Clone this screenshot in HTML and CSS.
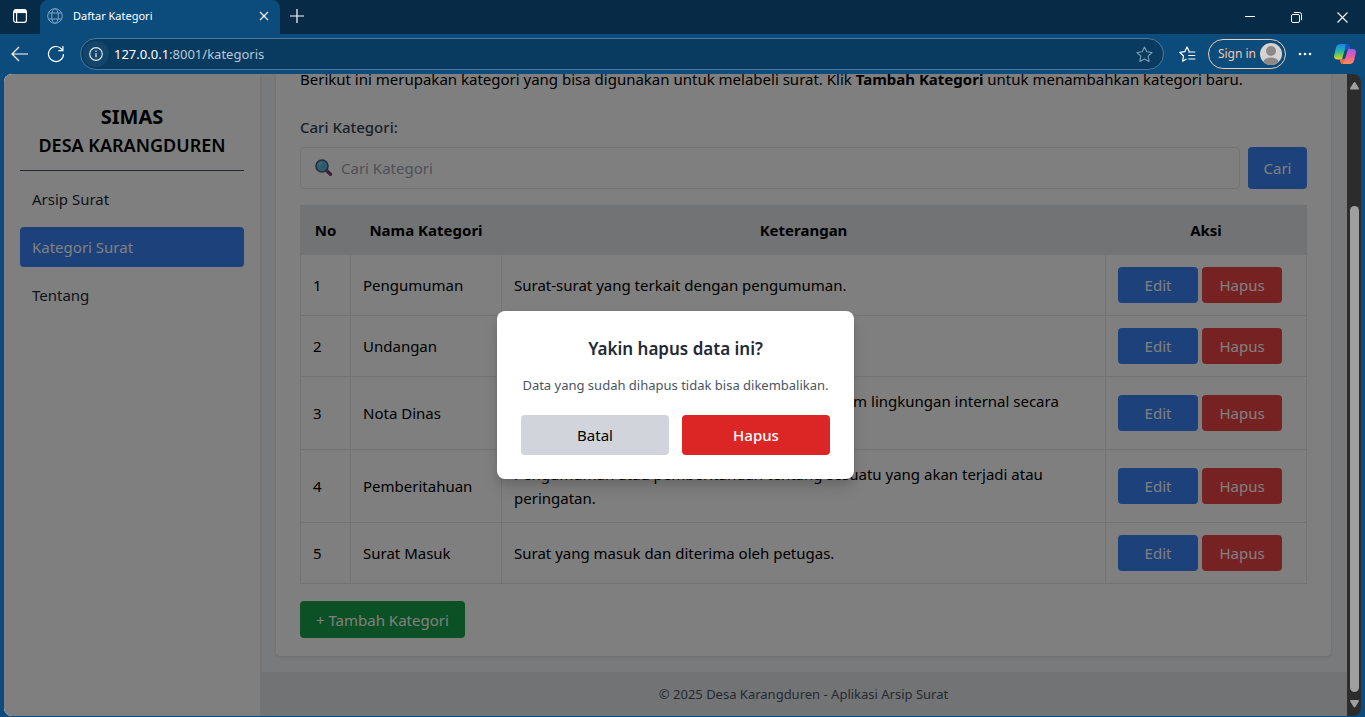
FILE: index.html
```html
<!DOCTYPE html>
<html lang="id">
<head>
<meta charset="utf-8">
<meta name="viewport" content="width=device-width, initial-scale=1">
<title>Daftar Kategori</title>
<link rel="stylesheet" href="styles.css">
</head>
<body>
<div class="browser">
  <header class="tabbar">
    <button class="tab-actions" aria-label="Tab actions"><svg width="16" height="16" viewBox="0 0 16 16" fill="none" stroke="#fff" stroke-width="1.2"><rect x="1.6" y="1.6" width="12.8" height="12.8" rx="2.4"/><path d="M4.6 5v9.4"/><path d="M2 3.4h12" stroke-width="3.4"/></svg></button>
    <div class="tab">
      <svg width="16" height="16" viewBox="0 0 16 16" fill="none" stroke="#7ba3c1" stroke-width="1"><circle cx="8" cy="8" r="7.3"/><ellipse cx="8" cy="8" rx="3.3" ry="7.3"/><path d="M1.4 5h13.2M1.4 11h13.2"/></svg>
      <span class="tab-title">Daftar Kategori</span>
      <button class="tab-close" aria-label="Close tab"><svg width="10" height="10" viewBox="0 0 10 10" stroke="#fff" stroke-width="1.2"><path d="M1 1l8 8M9 1l-8 8"/></svg></button>
    </div>
    <button class="new-tab" aria-label="New tab"><svg width="14" height="14" viewBox="0 0 14 14" stroke="#fff" stroke-width="1.2"><path d="M7 0v14M0 7h14"/></svg></button>
    <div class="window-controls">
      <button aria-label="Minimize"><svg width="10" height="10" viewBox="0 0 10 10" stroke="#fff"><path d="M0 4.5h10"/></svg></button>
      <button aria-label="Restore"><svg width="11" height="11" viewBox="0 0 11 11" fill="none" stroke="#fff"><rect x=".5" y="2.5" width="8" height="8" rx="1.4"/><path d="M2.8 .5h5.700a2 2 0 0 1 2 2v5.700"/></svg></button>
      <button aria-label="Close"><svg width="11" height="11" viewBox="0 0 11 11" stroke="#fff" stroke-width="1.1"><path d="M.5 .5l10 10M10.5 .5l-10 10"/></svg></button>
    </div>
  </header>
  <div class="toolbar">
    <button class="tool" aria-label="Back"><svg width="18" height="16" viewBox="0 0 18 16" fill="none" stroke="#fff" stroke-width="1.2"><path d="M8 1L1 8l7 7M1 8h16"/></svg></button>
    <button class="tool reload" aria-label="Reload"><svg width="18" height="18" viewBox="0 0 18 18" fill="none" stroke="#fff" stroke-width="1.2"><path d="M16.500 9A7.500 7.500 0 1 1 14.600 4l1.200 1.500"/><path d="M15.900 1v4.600h-4.600"/></svg></button>
    <div class="address">
      <span class="site-info"><svg width="14" height="14" viewBox="0 0 14 14" fill="none" stroke="#d7e3ec" stroke-width="1.2"><circle cx="7" cy="7" r="6.3"/><path d="M7 6.3v4M7 3.6v1.3" stroke-width="1.3"/></svg></span>
      <span class="url"><span class="host">127.0.0.1</span>:8001/kategoris</span>
      <button class="star" aria-label="Add to favorites"><svg width="17" height="17" viewBox="0 0 17 17" fill="none" stroke="#7d9db4" stroke-width="1.1" stroke-linejoin="round"><path d="M8.5 1l2.3 4.8 5.2.7-3.8 3.6.9 5.3-4.6-2.5-4.6 2.5.9-5.3L1 6.5l5.2-.7z"/></svg></button>
    </div>
    <button class="tool favorites" aria-label="Favorites"><svg width="17" height="17" viewBox="0 0 17 17" fill="none" stroke="#fff" stroke-width="1.2" stroke-linejoin="round"><path d="M10.3 5.5L8 1 5.8 5.7.8 6.4l3.7 3.6-.9 5.2L7.5 13"/><path d="M9.3 6h7M9.3 9.5h7M9.3 13h7"/></svg></button>
    <button class="sign-in">Sign in <svg width="22" height="22" viewBox="0 0 22 22"><defs><clipPath id="avatar"><circle cx="11" cy="11" r="11"/></clipPath></defs><g clip-path="url(#avatar)"><rect width="22" height="22" fill="#d6d4d2"/><circle cx="11" cy="8" r="5" fill="#8c8987"/><ellipse cx="11" cy="19" rx="7.6" ry="4.6" fill="#8c8987"/></g></svg></button>
    <button class="tool more" aria-label="Settings"><svg width="14" height="4" viewBox="0 0 14 4" fill="#fff"><circle cx="2" cy="2" r="1.3"/><circle cx="7" cy="2" r="1.3"/><circle cx="12" cy="2" r="1.3"/></svg></button>
    <button class="tool copilot" aria-label="Copilot"><svg width="22" height="20" viewBox="0 0 22 20"><defs><linearGradient id="cl" x1="0" y1="0" x2="0" y2="1"><stop offset="0" stop-color="#1686e8"/><stop offset=".45" stop-color="#26b3b0"/><stop offset=".75" stop-color="#7fca4a"/><stop offset="1" stop-color="#f0d02a"/></linearGradient><linearGradient id="cr" x1="0" y1="0" x2="0" y2="1"><stop offset="0" stop-color="#a35cf0"/><stop offset=".5" stop-color="#ec5aa0"/><stop offset="1" stop-color="#ff9058"/></linearGradient></defs><path d="M14 5h4.500q4 0 3.300 4l-1.600 7q-.9 4-4.700 4H9q-2.500 0-3-4.500h3.500q1.500 0 2-2z" fill="url(#cr)"/><path d="M8 15.500H3.500q-4 0-3.300-4l1.600-7Q2.700 0 6.500 0H13q2.500 0 3 4.500h-3.500q-1.500 0-2 2z" fill="url(#cl)"/><path d="M11.500 0H13q2.500 0 3 4.500h-3.300q-1.200 0-1.700 1.500z" fill="#1b50c8"/><path d="M6 15.500h3.500l.8-.4-1.300 4.900q-2.500 0-3-4.500z" fill="#f66b35"/></svg></button>
  </div>

  <div class="viewport">
    <div class="page">
      <aside class="sidebar">
        <div class="brand">
          <h1 class="brand-name">SIMAS</h1>
          <h2 class="brand-village">DESA KARANGDUREN</h2>
        </div>
        <nav class="menu">
          <a href="#arsip">Arsip Surat</a>
          <a href="#kategori" class="active">Kategori Surat</a>
          <a href="#tentang">Tentang</a>
        </nav>
      </aside>
      <div class="content">
        <main class="main">
          <section class="card">
            <p class="intro">Berikut ini merupakan kategori yang bisa digunakan untuk melabeli surat. Klik <b>Tambah Kategori</b> untuk menambahkan kategori baru.</p>
            <form class="search">
              <label class="search-label" for="cari">Cari Kategori:</label>
              <div class="search-row">
                <div class="search-box">
                  <svg width="18" height="18" viewBox="0 0 18 18"><path d="M11.500 11.500l4 3.800" stroke="#7c3a74" stroke-width="3.400" stroke-linecap="round"/><circle cx="7" cy="7" r="6" fill="#5bbbd9" stroke="#44617f" stroke-width="1.600"/><path d="M4 6.500a3.500 3.500 0 0 1 3-2.800" fill="none" stroke="#9adcf0" stroke-width="1.200"/></svg>
                  <input id="cari" type="text" placeholder="Cari Kategori">
                </div>
                <button type="button" class="btn-search">Cari</button>
              </div>
            </form>
            <table class="table">
              <colgroup><col class="col-no"><col class="col-name"><col><col class="col-action"></colgroup>
              <thead><tr><th>No</th><th>Nama Kategori</th><th>Keterangan</th><th>Aksi</th></tr></thead>
              <tbody>
                <tr><td>1</td><td>Pengumuman</td><td>Surat-surat yang terkait dengan pengumuman.</td><td><div class="actions"><button class="edit">Edit</button><button class="delete">Hapus</button></div></td></tr>
                <tr><td>2</td><td>Undangan</td><td>Undangan rapat, koordinasi, dll.</td><td><div class="actions"><button class="edit">Edit</button><button class="delete">Hapus</button></div></td></tr>
                <tr><td>3</td><td>Nota Dinas</td><td>Nota dinas berupa surat yang digunakan di dalam lingkungan internal secara kedinasan.</td><td><div class="actions"><button class="edit">Edit</button><button class="delete">Hapus</button></div></td></tr>
                <tr><td>4</td><td>Pemberitahuan</td><td>Pengumuman atau pemberitahuan tentang sesuatu yang akan terjadi atau peringatan.</td><td><div class="actions"><button class="edit">Edit</button><button class="delete">Hapus</button></div></td></tr>
                <tr><td>5</td><td>Surat Masuk</td><td>Surat yang masuk dan diterima oleh petugas.</td><td><div class="actions"><button class="edit">Edit</button><button class="delete">Hapus</button></div></td></tr>
              </tbody>
            </table>
            <a class="btn-add" href="#tambah">+ Tambah Kategori</a>
          </section>
        </main>
        <footer class="footer">© 2025 Desa Karangduren - Aplikasi Arsip Surat</footer>
      </div>
      <div class="overlay">
        <div class="dialog" role="dialog" aria-labelledby="dialog-title">
          <h3 class="dialog-title" id="dialog-title">Yakin hapus data ini?</h3>
          <p class="dialog-text">Data yang sudah dihapus tidak bisa dikembalikan.</p>
          <div class="dialog-buttons">
            <button class="cancel">Batal</button>
            <button class="confirm">Hapus</button>
          </div>
        </div>
      </div>
    </div>
    <div class="scrollbar">
      <svg width="9" height="8" viewBox="0 0 9 8" fill="#9f9f9f"><path d="M4.500 0q.6 0 1 .7L8.800 6q.4 1.500-.8 1.500H1Q-.2 7.500.2 6L3.500.7q.4-.7 1-.7z"/></svg>
      <div class="thumb"></div>
      <svg width="9" height="8" viewBox="0 0 9 8" fill="#9f9f9f"><path d="M4.500 7.500q.6 0 1-.7L8.800 1.500Q9.200 0 8 0H1Q-.2 0 .2 1.500l3.300 5.300q.4.7 1 .7z"/></svg>
    </div>
  </div>
</div>
</body>
</html>
```
FILE: styles.css
```css
* { box-sizing: border-box; }

body {
  margin: 0;
  font-family: "Noto Sans", "Open Sans", sans-serif;
  font-size: 15px;
  line-height: 24px;
  color: #000;
}

h1, h2, h3, p { margin: 0; }
a { color: inherit; text-decoration: none; }
svg { display: block; flex: none; }

button {
  font: inherit;
  color: inherit;
  border: 0;
  padding: 0;
  background: none;
}

/* Browser window */
.browser {
  display: flex;
  flex-direction: column;
  height: 100vh;
  background: #0c4c7c;
  overflow: hidden;
}

.tabbar {
  display: flex;
  align-items: stretch;
  height: 34px;
  background: #072a46;
  color: #fff;
  font-size: 12px;
}

.tabbar button {
  display: flex;
  align-items: center;
  justify-content: center;
}

.tabbar .tab-actions { width: 40px; padding-bottom: 2px; }

.tab {
  display: flex;
  align-items: center;
  gap: 10px;
  width: 240px;
  padding: 0 11px 2px 7px;
  background: #0c4c7c;
  border-radius: 8px 8px 0 0;
}

.tab-title { flex: 1; font-size: 11px; }
.new-tab { width: 34px; padding-bottom: 2px; }
.window-controls { display: flex; margin-left: auto; }
.window-controls button { width: 46px; }

.toolbar {
  display: flex;
  align-items: center;
  height: 40px;
  color: #fff;
}

.tool {
  display: flex;
  align-items: center;
  justify-content: center;
  width: 40px;
  height: 32px;
}

.reload { width: 32px; }

.address {
  display: flex;
  flex: 1;
  align-items: center;
  gap: 5px;
  height: 32px;
  margin-left: 8px;
  padding: 0 10px 0 2px;
  border: 1px solid #4d7899;
  border-radius: 16px;
  background: #093a5f;
}

.site-info {
  display: flex;
  align-items: center;
  justify-content: center;
  width: 26px;
  height: 26px;
  border-radius: 50%;
  background: #14456a;
}

.url { flex: 1; font-size: 13px; color: #b9c8d4; }
.host { color: #fff; }
.favorites { width: 44px; padding-left: 4px; }

.sign-in {
  display: flex;
  align-items: center;
  gap: 4px;
  height: 30px;
  padding: 0 3px 0 9px;
  border: 1px solid #f3c9a8;
  border-radius: 15px;
  font-size: 12px;
  color: #f3c9a8;
}

.more { width: 38px; }
.copilot { width: 41px; }

/* Page area */
.viewport {
  display: flex;
  flex: 1;
  min-height: 0;
  margin: 0 4px 1px;
  border-radius: 8px;
  background: #2c2c2c;
  overflow: hidden;
}

.page {
  position: relative;
  display: flex;
  flex: 1;
  background: #f3f4f6;
  overflow: hidden;
}

.scrollbar {
  display: flex;
  flex-direction: column;
  align-items: center;
  width: 14px;
  padding: 8px 0;
}

.thumb {
  flex: 1;
  width: 9px;
  margin: 116px 0 8px;
  border-radius: 5px;
  background: #9f9f9f;
}

.sidebar {
  width: 256px;
  padding: 29px 16px;
  background: #fff;
  box-shadow: 0 1px 3px rgba(0, 0, 0, .12);
}

.brand {
  padding-bottom: 11px;
  border-bottom: 1px solid #4b5563;
  text-align: center;
  line-height: 28px;
}

.brand-name { font-size: 20px; font-weight: 700; }
.brand-village { font-size: 18px; font-weight: 600; }

.menu {
  display: flex;
  flex-direction: column;
  gap: 8px;
  margin-top: 8px;
}

.menu a {
  padding: 8px 12px;
  border-radius: 4px;
  color: #1f2937;
}

.menu .active { background: #3b82f6; color: #fff; }

.content {
  display: flex;
  flex: 1;
  flex-direction: column;
  justify-content: flex-end;
  min-width: 0;
}

.main { padding: 16px; }

.card {
  padding: 24px 24px 18px;
  border-radius: 4px;
  background: #fff;
  box-shadow: 0 1px 3px rgba(0, 0, 0, .12);
}

.intro { margin-bottom: 24px; }
.search { margin-bottom: 16px; }

.search-label {
  display: block;
  margin-bottom: 8px;
  font-weight: 500;
  color: #374151;
}

.search-row { display: flex; gap: 8px; }

.search-box {
  display: flex;
  flex: 1;
  align-items: center;
  gap: 8px;
  height: 42px;
  padding: 0 14px;
  border: 1px solid #e5e7eb;
  border-radius: 4px;
}

.search-box input {
  flex: 1;
  min-width: 0;
  padding: 0;
  border: 0;
  outline: 0;
  background: none;
  font: inherit;
}

.search-box input::placeholder { color: #9ca3af; opacity: 1; }

.btn-search {
  width: 59px;
  border-radius: 4px;
  background: #3b82f6;
  color: #fff;
}

.table {
  width: 100%;
  table-layout: fixed;
  border-collapse: collapse;
}

.col-no { width: 50px; }
.col-name { width: 151px; }
.col-action { width: 201px; }

.table th {
  padding: 12px;
  border: 1px solid #e5e7eb;
  background: #e5e7eb;
  font-weight: 700;
}

.table td {
  padding: 12px;
  border: 1px solid #e5e7eb;
}

.actions { display: flex; gap: 4px; }

.actions button {
  width: 80px;
  height: 36px;
  border-radius: 4px;
  color: #fff;
}

.edit { background: #3b82f6; }
.actions .delete { background: #ef4444; }

.btn-add {
  display: block;
  width: fit-content;
  margin-top: 17px;
  padding: 7px 16px 6px;
  border-radius: 4px;
  background: #16a34a;
  color: #fff;
}

.footer {
  padding: 12px;
  background: #e5e7eb;
  font-size: 13px;
  line-height: 20px;
  text-align: center;
  color: #4b5563;
}

/* Confirmation dialog */
.overlay {
  position: absolute;
  inset: 0;
  display: flex;
  align-items: center;
  justify-content: center;
  background: rgba(0, 0, 0, .5);
}

.dialog {
  width: 357px;
  padding: 24px;
  border-radius: 8px;
  background: #fff;
  box-shadow: 0 10px 15px rgba(0, 0, 0, .1), 0 4px 6px rgba(0, 0, 0, .1);
  text-align: center;
}

.dialog-title {
  margin-bottom: 12px;
  font-size: 17px;
  font-weight: 600;
  line-height: 28px;
  color: #1f2937;
}

.dialog-text {
  margin-bottom: 20px;
  font-size: 13px;
  line-height: 20px;
  color: #4b5563;
}

.dialog-buttons { display: flex; gap: 13px; }

.dialog-buttons button {
  flex: 1;
  height: 40px;
  border-radius: 4px;
}

.cancel { background: #d1d5db; }
.dialog-buttons .confirm { background: #dc2626; color: #fff; font-weight: 500; }
```
